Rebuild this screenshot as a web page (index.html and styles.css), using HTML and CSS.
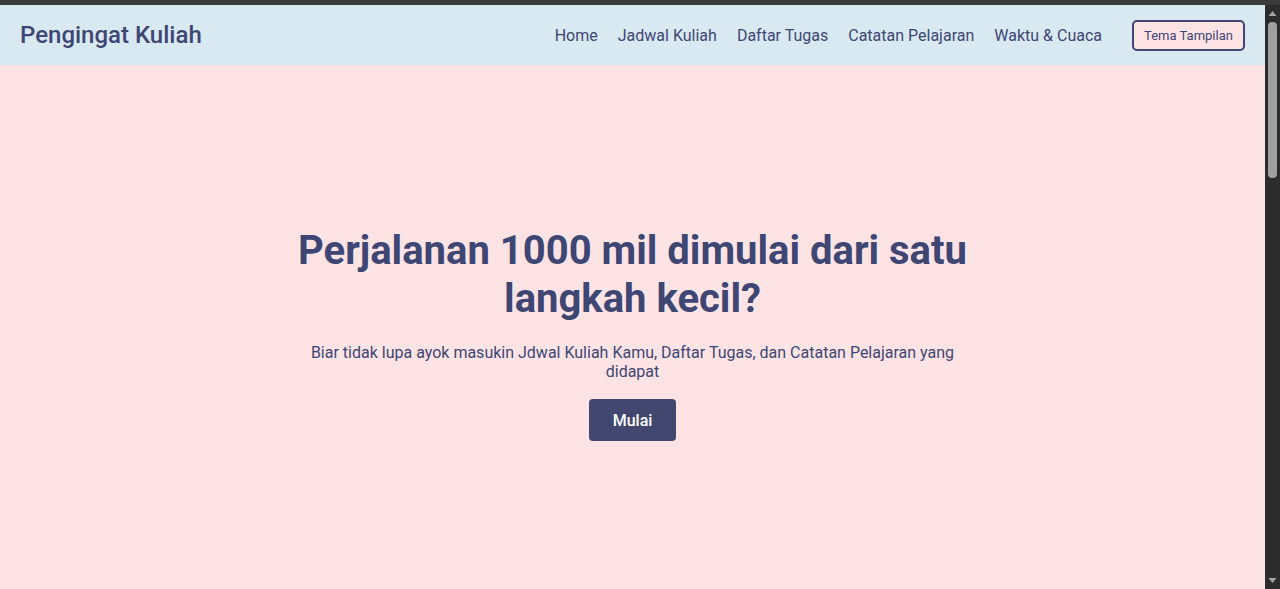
FILE: index.html
```html
<!DOCTYPE html>
<html lang="id">
<head>
<meta charset="utf-8">
<title>Pengingat Kuliah</title>
<link rel="stylesheet" href="styles.css">
</head>
<body>
<div class="topstrip"></div>
<div class="frame">
  <div class="page">
    <header class="navbar">
      <div class="brand">Pengingat Kuliah</div>
      <nav class="menu">
        <a href="#" class="menu-link">Home</a>
        <a href="#" class="menu-link">Jadwal Kuliah</a>
        <a href="#" class="menu-link">Daftar Tugas</a>
        <a href="#" class="menu-link">Catatan Pelajaran</a>
        <a href="#" class="menu-link">Waktu &amp; Cuaca</a>
        <button class="theme-btn">Tema Tampilan</button>
      </nav>
    </header>
    <main class="hero">
      <div class="hero-inner">
        <h1 class="hero-title">Perjalanan 1000 mil dimulai dari satu langkah kecil?</h1>
        <p class="hero-text">Biar tidak lupa ayok masukin Jdwal Kuliah Kamu, Daftar Tugas, dan Catatan Pelajaran yang didapat</p>
        <button class="start-btn">Mulai</button>
      </div>
    </main>
  </div>
  <div class="scrollbar">
    <svg class="arrow" width="15" height="17" viewBox="0 0 15 17"><path d="M3.5 11 L7.5 6 L11.5 11 Z" fill="#a3a3a3"/></svg>
    <div class="track"><div class="thumb"></div></div>
    <svg class="arrow" width="15" height="17" viewBox="0 0 15 17"><path d="M3.5 6 L7.5 11 L11.5 6 Z" fill="#a3a3a3"/></svg>
  </div>
</div>
</body>
</html>
```
FILE: styles.css
```css
* { box-sizing: border-box; }
html, body { margin: 0; padding: 0; height: 100%; overflow: hidden; }
body {
  font-family: Roboto, "Liberation Sans", sans-serif;
  color: #3e4674;
  background: #2b2b2b;
  display: flex;
  flex-direction: column;
}
.topstrip { height: 5px; background: #3a3a3a; flex: none; }
.frame { flex: 1; display: flex; min-height: 0; }
.page { flex: 1; display: flex; flex-direction: column; background: #fee3e4; }
.navbar {
  height: 60px;
  background: #d9e9f1;
  display: flex;
  align-items: center;
  justify-content: space-between;
  padding: 0 20px;
}
.brand { font-size: 24px; font-weight: 500; color: #3e4674; }
.menu { display: flex; align-items: center; gap: 20px; }
.menu-link { color: #3e4674; text-decoration: none; font-size: 16px; }
.theme-btn {
  margin-left: 10px;
  font-family: inherit;
  font-size: 13px;
  color: #3e4674;
  background: #fee3e4;
  border: 2px solid #3e4674;
  border-radius: 5px;
  width: 113px;
  height: 31px;
  padding: 0;
}
.hero { flex: 1; display: flex; justify-content: center; padding-top: 162px; }
.hero-inner { width: 680px; text-align: center; }
.hero-title { margin: 0; font-size: 40px; font-weight: 700; line-height: 48px; }
.hero-text { margin: 20px 0 0; font-size: 16px; line-height: 19px; }
.start-btn {
  margin-top: 18px;
  font-family: inherit;
  font-size: 16px;
  font-weight: 500;
  color: #ffffff;
  background: #41476f;
  border: none;
  border-radius: 4px;
  width: 87px;
  height: 42px;
}
.scrollbar { width: 15px; background: #2c2c2c; display: flex; flex-direction: column; align-items: center; }
.arrow { flex: none; }
.track { flex: 1; width: 100%; padding: 0 3px; }
.thumb { height: 156px; background: #9f9f9f; border-radius: 4px; }
```
